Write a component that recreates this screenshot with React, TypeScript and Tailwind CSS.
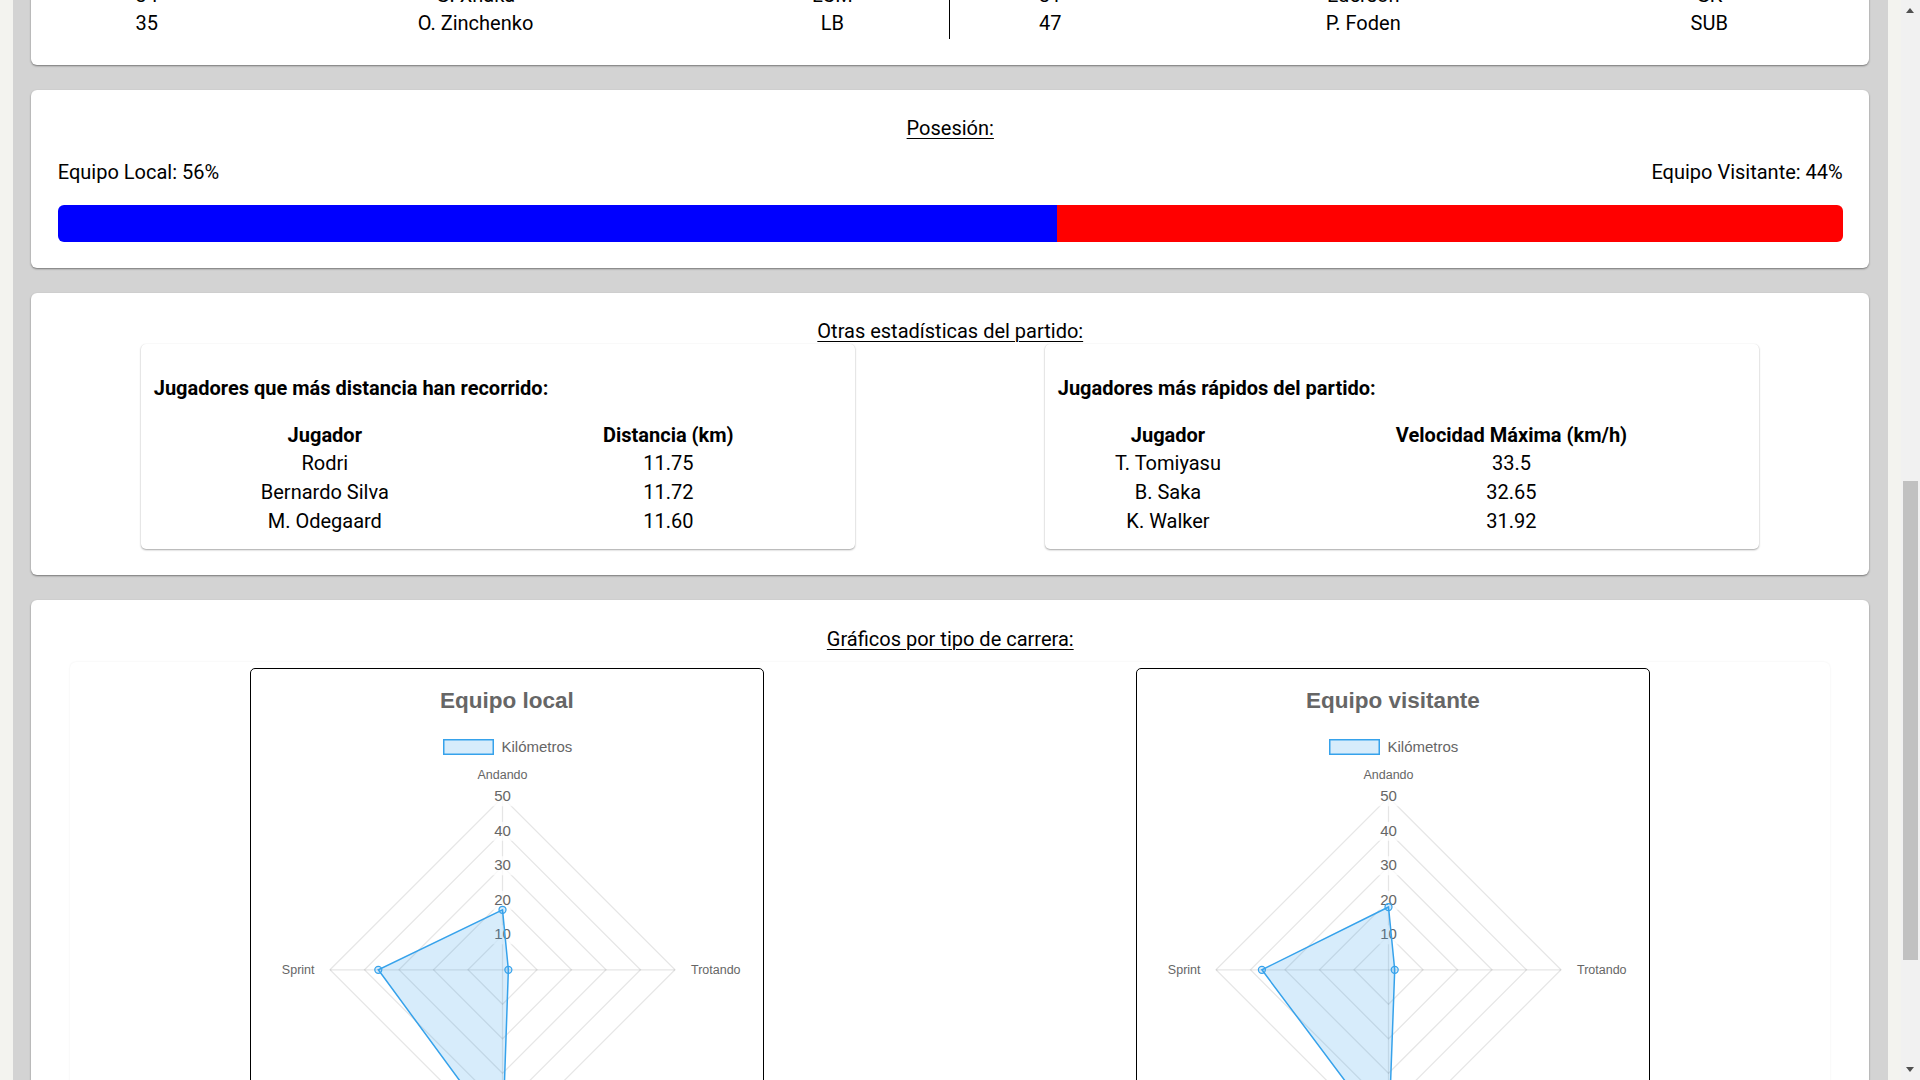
import React from "react";

type LineupRow = [string, string, string];

const homeRows: LineupRow[] = [
  ["34", "G. Xhaka", "LCM"],
  ["35", "O. Zinchenko", "LB"],
];

const awayRows: LineupRow[] = [
  ["31", "Ederson", "GK"],
  ["47", "P. Foden", "SUB"],
];

const distanceRows = [
  ["Rodri", "11.75"],
  ["Bernardo Silva", "11.72"],
  ["M. Odegaard", "11.60"],
];

const speedRows = [
  ["T. Tomiyasu", "33.5"],
  ["B. Saka", "32.65"],
  ["K. Walker", "31.92"],
];

const cardCls =
  "rounded-[6px] bg-white px-[26.5px] shadow-[0_1px_2px_rgba(0,0,0,0.45)]";

const SectionTitle = ({ children }: { children: React.ReactNode }) => (
  <div className="text-center leading-[26px]">
    <span className="underline decoration-[1.25px] underline-offset-[3px]">
      {children}
    </span>
  </div>
);

const StatsTable = ({
  title,
  cols,
  rows,
}: {
  title: string;
  cols: [string, string];
  rows: string[][];
}) => (
  <div className="w-[714px] rounded-[5px] bg-white px-[12.5px] pt-[12.5px] pb-[11.5px] shadow-[0_1px_2px_rgba(0,0,0,0.35),0_0_1px_rgba(0,0,0,0.08)]">
    <h4 className="mt-[20.6px] mb-[19.4px] font-bold leading-[23.4px]">{title}</h4>
    <table className="w-full border-separate border-spacing-[2px] text-center">
      <thead>
        <tr>
          {cols.map((c) => (
            <th key={c} className="px-[1.25px] py-[1.7px] font-bold leading-[23.4px]">
              {c}
            </th>
          ))}
        </tr>
      </thead>
      <tbody>
        {rows.map((r) => (
          <tr key={r[0]}>
            {r.map((v, i) => (
              <td key={i} className="px-[1.25px] py-[1.7px] leading-[23.4px]">
                {v}
              </td>
            ))}
          </tr>
        ))}
      </tbody>
    </table>
  </div>
);

const RadarChart = ({ title, values }: { title: string; values: number[] }) => {
  const cx = 251.5;
  const cy = 300.8;
  const unit = 3.45;
  const labels = ["Andando", "Trotando", "Corriendo", "Sprint"];

  const pt = (i: number, v: number) => {
    const a = -Math.PI / 2 + (i * Math.PI) / 2;
    return [cx + Math.cos(a) * v * unit, cy + Math.sin(a) * v * unit];
  };
  const ring = (v: number) =>
    [0, 1, 2, 3].map((i) => pt(i, v).join(",")).join(" ");
  const data = values.map((v, i) => pt(i, v));

  return (
    <div className="h-[562px] w-[514px] overflow-hidden rounded-[5px] border border-black bg-white">
      <svg width="512" height="560" fontFamily="Liberation Sans, Arial, sans-serif">
        <text x="256" y="39" textAnchor="middle" fontSize="22.5" fontWeight="bold" fill="#666">
          {title}
        </text>

        {/* legend */}
        <rect
          x="192.75"
          y="70.75"
          width="49.5"
          height="14.5"
          fill="rgba(54,162,235,0.2)"
          stroke="#36a2eb"
          strokeWidth="1.5"
        />
        <text x="250.5" y="82.5" fontSize="15" fill="#666">
          Kilómetros
        </text>

        {/* grid */}
        {[10, 20, 30, 40, 50].map((v) => (
          <polygon key={v} points={ring(v)} fill="none" stroke="rgba(0,0,0,0.1)" strokeWidth="1.25" />
        ))}
        {[0, 1, 2, 3].map((i) => {
          const [x, y] = pt(i, 50);
          return <line key={i} x1={cx} y1={cy} x2={x} y2={y} stroke="rgba(0,0,0,0.1)" strokeWidth="1.25" />;
        })}

        {/* point labels */}
        <text x={cx} y="109.8" textAnchor="middle" fontSize="12.5" fill="#666">
          {labels[0]}
        </text>
        <text x="440" y={cy + 4.5} fontSize="12.5" fill="#666">
          {labels[1]}
        </text>
        <text x={cx} y={cy + 50 * unit + 27} textAnchor="middle" fontSize="12.5" fill="#666">
          {labels[2]}
        </text>
        <text x="63.5" y={cy + 4.5} textAnchor="end" fontSize="12.5" fill="#666">
          {labels[3]}
        </text>

        {/* ticks */}
        {[10, 20, 30, 40, 50].map((v) => (
          <g key={v}>
            <rect x={cx - 11} y={cy - v * unit - 10} width="22" height="19" fill="rgba(255,255,255,0.75)" />
            <text x={cx} y={cy - v * unit + 4} textAnchor="middle" fontSize="15" fill="#666">
              {v}
            </text>
          </g>
        ))}

        {/* dataset */}
        <polygon
          points={data.map((p) => p.join(",")).join(" ")}
          fill="rgba(54,162,235,0.2)"
          stroke="#36a2eb"
          strokeWidth="1.5"
        />
        {data.map(([x, y], i) => (
          <circle key={i} cx={x} cy={y} r="3.5" fill="rgba(54,162,235,0.2)" stroke="#36a2eb" strokeWidth="1.25" />
        ))}
      </svg>
    </div>
  );
};

const LineupHalf = ({ rows, cols, bordered }: { rows: LineupRow[]; cols: string[]; bordered?: boolean }) => (
  <div className={`flex w-1/2 flex-col gap-[2.5px] py-[2.5px] ${bordered ? "border-r border-black" : ""}`}>
    {rows.map((r) => (
      <div key={r[0]} className="flex h-[25.9px] items-center leading-[23.4px]">
        {r.map((v, i) => (
          <span key={i} className={`${cols[i]} text-center`}>
            {v}
          </span>
        ))}
      </div>
    ))}
  </div>
);

export default function App() {
  return (
    <div className="flex h-screen w-full overflow-hidden bg-[#f3f3ef] font-[family-name:Roboto,sans-serif] text-[20px] text-black">
      <div className="h-full flex-1 px-[12.5px]">
        <div className="flex h-full flex-col gap-[25px] bg-[#d3d3d3] px-[18.75px]">
          {/* Alineaciones (scrolled) */}
          <div className={`${cardCls} -mt-[20.2px] pb-[26px]`}>
            <div className="flex">
              <LineupHalf rows={homeRows} cols={["w-[178px]", "w-[480px]", "w-[234px]"]} bordered />
              <LineupHalf rows={awayRows} cols={["w-[200px]", "w-[426px]", "w-[266px]"]} />
            </div>
          </div>

          {/* Posesión */}
          <div className={`${cardCls} pt-[25px] pb-[26px]`}>
            <SectionTitle>Posesión:</SectionTitle>
            <div className="mt-[20px] flex justify-between leading-[23.4px]">
              <span>Equipo Local: 56%</span>
              <span>Equipo Visitante: 44%</span>
            </div>
            <div className="mt-[20px] flex h-[37.5px] overflow-hidden rounded-[6px]">
              <div className="w-[56%] bg-[#0000ff]" />
              <div className="flex-1 bg-[#ff0000]" />
            </div>
          </div>

          {/* Otras estadísticas */}
          <div className={`${cardCls} pt-[25px] pb-[26px]`}>
            <SectionTitle>Otras estadísticas del partido:</SectionTitle>
            <div className="flex justify-center gap-[190px]">
              <StatsTable
                title="Jugadores que más distancia han recorrido:"
                cols={["Jugador", "Distancia (km)"]}
                rows={distanceRows}
              />
              <StatsTable
                title="Jugadores más rápidos del partido:"
                cols={["Jugador", "Velocidad Máxima (km/h)"]}
                rows={speedRows}
              />
            </div>
          </div>

          {/* Gráficos */}
          <div className={`${cardCls} shrink-0 pt-[26px] pb-[26px]`}>
            <SectionTitle>Gráficos por tipo de carrera:</SectionTitle>
            <div className="mx-[12.5px] mt-[10px] rounded-[6px] p-[6.25px] shadow-[0_0_2px_rgba(0,0,0,0.08)]">
              <div className="flex justify-center gap-[372px]">
                <RadarChart title="Equipo local" values={[17.4, 1.7, 49, 36]} />
                <RadarChart title="Equipo visitante" values={[18.2, 1.8, 49, 36.7]} />
              </div>
            </div>
          </div>
        </div>
      </div>

      {/* scrollbar */}
      <div className="flex h-full w-[21px] flex-col bg-[#f1f1f1]">
        <div className="flex h-[21px] items-center justify-center">
          <svg width="8" height="5" viewBox="0 0 8 5">
            <path d="M4 0 L8 5 L0 5 Z" fill="#505050" />
          </svg>
        </div>
        <div className="flex-1 px-[2px] pt-[460px]">
          <div className="h-[479px] bg-[#c1c1c1]" />
        </div>
        <div className="flex h-[21px] items-center justify-center">
          <svg width="8" height="5" viewBox="0 0 8 5">
            <path d="M0 0 L8 0 L4 5 Z" fill="#505050" />
          </svg>
        </div>
      </div>
    </div>
  );
}
